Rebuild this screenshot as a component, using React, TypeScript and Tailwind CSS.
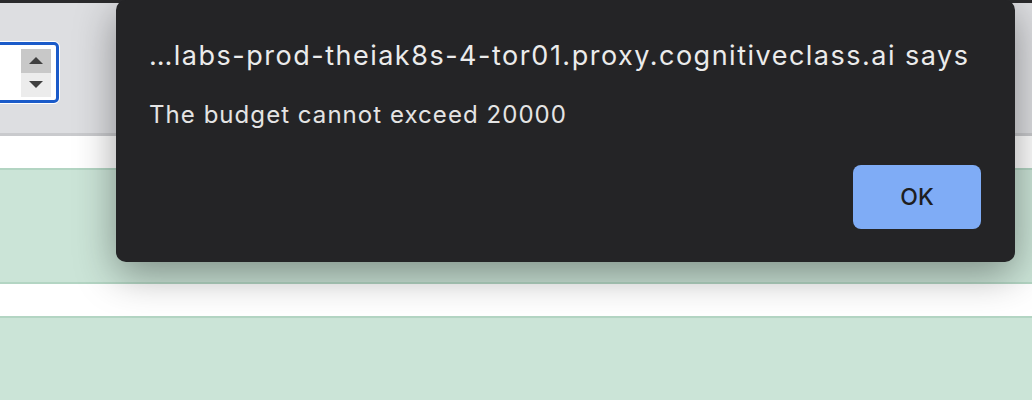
const App = () => {
  return (
    <div className="relative w-full h-[402px] overflow-hidden bg-white font-['Inter',sans-serif]">
      {/* page underneath the alert */}
      <div className="h-[3px] bg-[#2a2a2c]" />
      <div className="h-[133px] bg-[#dddee1] border-b-[3px] border-[#c9cacd] pt-[38px]">
        <div className="ml-[-40px] w-[100px] h-[63px] rounded-[6px] border border-white bg-white">
          <div className="h-full rounded-[5px] border-[3px] border-[#1b5bc9] flex items-center justify-end pr-[5px]">
            <div className="w-[30px] h-[48px] flex flex-col">
              <div className="flex-1 bg-[#c8c8c8] flex items-center justify-center">
                <svg width="14" height="7" viewBox="0 0 14 7">
                  <path d="M7 0L14 7H0Z" fill="#404040" />
                </svg>
              </div>
              <div className="flex-1 bg-[#ececec] flex items-center justify-center">
                <svg width="14" height="7" viewBox="0 0 14 7">
                  <path d="M0 0H14L7 7Z" fill="#404040" />
                </svg>
              </div>
            </div>
          </div>
        </div>
      </div>
      <div className="h-[32px] bg-white" />
      <div className="h-[116px] bg-[#cbe4d7] border-y-2 border-[#b3d5c3]" />
      <div className="h-[32px] bg-white" />
      <div className="h-[84px] bg-[#cbe4d7] border-t-2 border-[#b3d5c3]" />

      {/* alert dialog */}
      <div className="absolute left-[116px] top-0 w-[899px] h-[262px] rounded-[10px] bg-[#242426] shadow-[0_12px_40px_rgba(0,0,0,0.38)] pl-[33px] pr-[34px] pt-[40px]">
        <div className="text-[27px] leading-[32px] tracking-[1.5px] text-[#ebebeb] whitespace-nowrap">
          …labs-prod-theiak8s-4-tor01.proxy.cognitiveclass.ai says
        </div>
        <div className="mt-[28px] text-[24px] leading-[30px] tracking-[1.05px] text-[#e4e4e4]">
          The budget cannot exceed 20000
        </div>
        <div className="flex justify-end mt-[35px]">
          <button className="w-[128px] h-[64px] rounded-[8px] bg-[#7facf6] text-[23px] font-medium text-[#1e1e20]">
            OK
          </button>
        </div>
      </div>
    </div>
  );
};

export default App;
